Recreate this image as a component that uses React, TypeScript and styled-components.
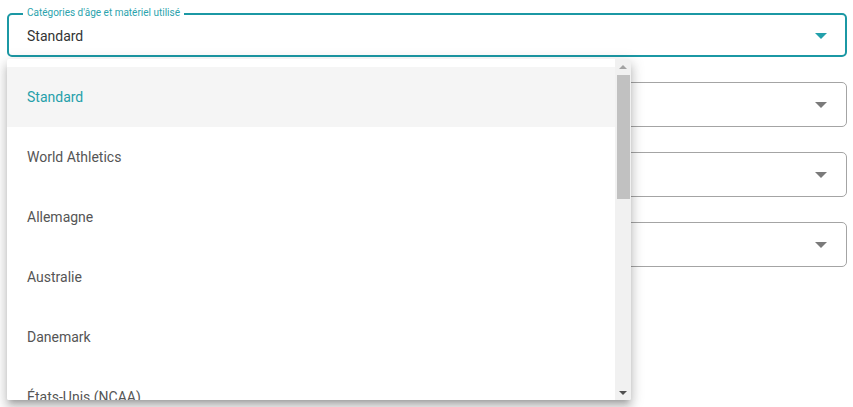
import React from "react";
import styled, { createGlobalStyle } from "styled-components";

const Global = createGlobalStyle`
  html, body { margin: 0; padding: 0; background: #fff; }
  body { font-family: Roboto, "Noto Sans", sans-serif; }
`;

const Page = styled.div`
  position: relative;
  width: 853px;
  height: 407px;
  overflow: hidden;
  box-sizing: border-box;
  padding: 13px 6px 0 7px;
  display: flex;
  flex-direction: column;
  gap: 25px;
`;

const Field = styled.div<{ $focused?: boolean }>`
  position: relative;
  box-sizing: border-box;
  height: ${(p) => (p.$focused ? "44px" : "45px")};
  border: ${(p) => (p.$focused ? "2px solid #1b98a4" : "1px solid #a4a4a4")};
  border-radius: 5px;
  display: flex;
  align-items: center;
  justify-content: space-between;
  padding: ${(p) => (p.$focused ? "0 18px 0 18px" : "0 19px 0 19px")};
  background: #fff;
`;

const Legend = styled.span`
  position: absolute;
  top: -8px;
  left: 14px;
  padding: 0 4px 0 4px;
  background: #fff;
  font-size: 10px;
  line-height: 12px;
  color: #2ba3ad;
`;

const Value = styled.span`
  font-size: 14px;
  color: #333;
  padding-top: 1px;
`;

const Arrow = styled.span<{ $focused?: boolean }>`
  width: 0;
  height: 0;
  border-left: 6px solid transparent;
  border-right: 6px solid transparent;
  border-top: 6px solid ${(p) => (p.$focused ? "#22a0ab" : "#7a7a7a")};
  margin-top: 1px;
`;

const Menu = styled.div`
  position: absolute;
  left: 7px;
  top: 59px;
  width: 624px;
  height: 341px;
  display: flex;
  background: #fff;
  border-radius: 2px;
  overflow: hidden;
  box-shadow: 0 5px 5px -3px rgba(0, 0, 0, 0.2),
    0 8px 10px 1px rgba(0, 0, 0, 0.14), 0 3px 14px 2px rgba(0, 0, 0, 0.12);
`;

const List = styled.ul`
  flex: 1;
  margin: 0;
  padding: 8px 0;
  list-style: none;
  overflow-y: auto;
  scrollbar-width: none;
`;

const Item = styled.li<{ $selected?: boolean }>`
  height: 60px;
  display: flex;
  align-items: center;
  padding: 0 20px;
  font-size: 14px;
  color: ${(p) => (p.$selected ? "#26a0aa" : "#555")};
  background: ${(p) => (p.$selected ? "#f5f5f5" : "#fff")};
`;

const ScrollBar = styled.div`
  width: 16px;
  flex: none;
  background: #f1f1f1;
  display: flex;
  flex-direction: column;
`;

const ScrollButton = styled.div<{ $down?: boolean }>`
  height: 16px;
  flex: none;
  display: flex;
  align-items: center;
  justify-content: center;
  &::before {
    content: "";
    width: 0;
    height: 0;
    border-left: 4px solid transparent;
    border-right: 4px solid transparent;
    ${(p) =>
      p.$down
        ? "border-top: 4px solid #505050; margin-top: 1px;"
        : "border-bottom: 4px solid #a3a3a3; margin-bottom: 1px;"}
  }
`;

const Track = styled.div`
  flex: 1;
  padding: 0 1px 0 2px;
`;

const Thumb = styled.div`
  height: 124px;
  background: #c1c1c1;
`;

const options = [
  "Standard",
  "World Athletics",
  "Allemagne",
  "Australie",
  "Danemark",
  "États-Unis (NCAA)",
  "États-Unis (High School)",
  "France",
  "Grande-Bretagne",
  "Italie",
  "Japon",
  "Norvège",
  "Pays-Bas",
  "Suède",
];

export default function App() {
  return (
    <>
      <Global />
      <Page>
        <Field $focused>
          <Legend>Catégories d'âge et matériel utilisé</Legend>
          <Value>Standard</Value>
          <Arrow $focused />
        </Field>
        <Field>
          <Value />
          <Arrow />
        </Field>
        <Field>
          <Value />
          <Arrow />
        </Field>
        <Field>
          <Value />
          <Arrow />
        </Field>
        <Menu>
          <List>
            {options.map((o, i) => (
              <Item key={o} $selected={i === 0}>
                {o}
              </Item>
            ))}
          </List>
          <ScrollBar>
            <ScrollButton />
            <Track>
              <Thumb />
            </Track>
            <ScrollButton $down />
          </ScrollBar>
        </Menu>
      </Page>
    </>
  );
}
